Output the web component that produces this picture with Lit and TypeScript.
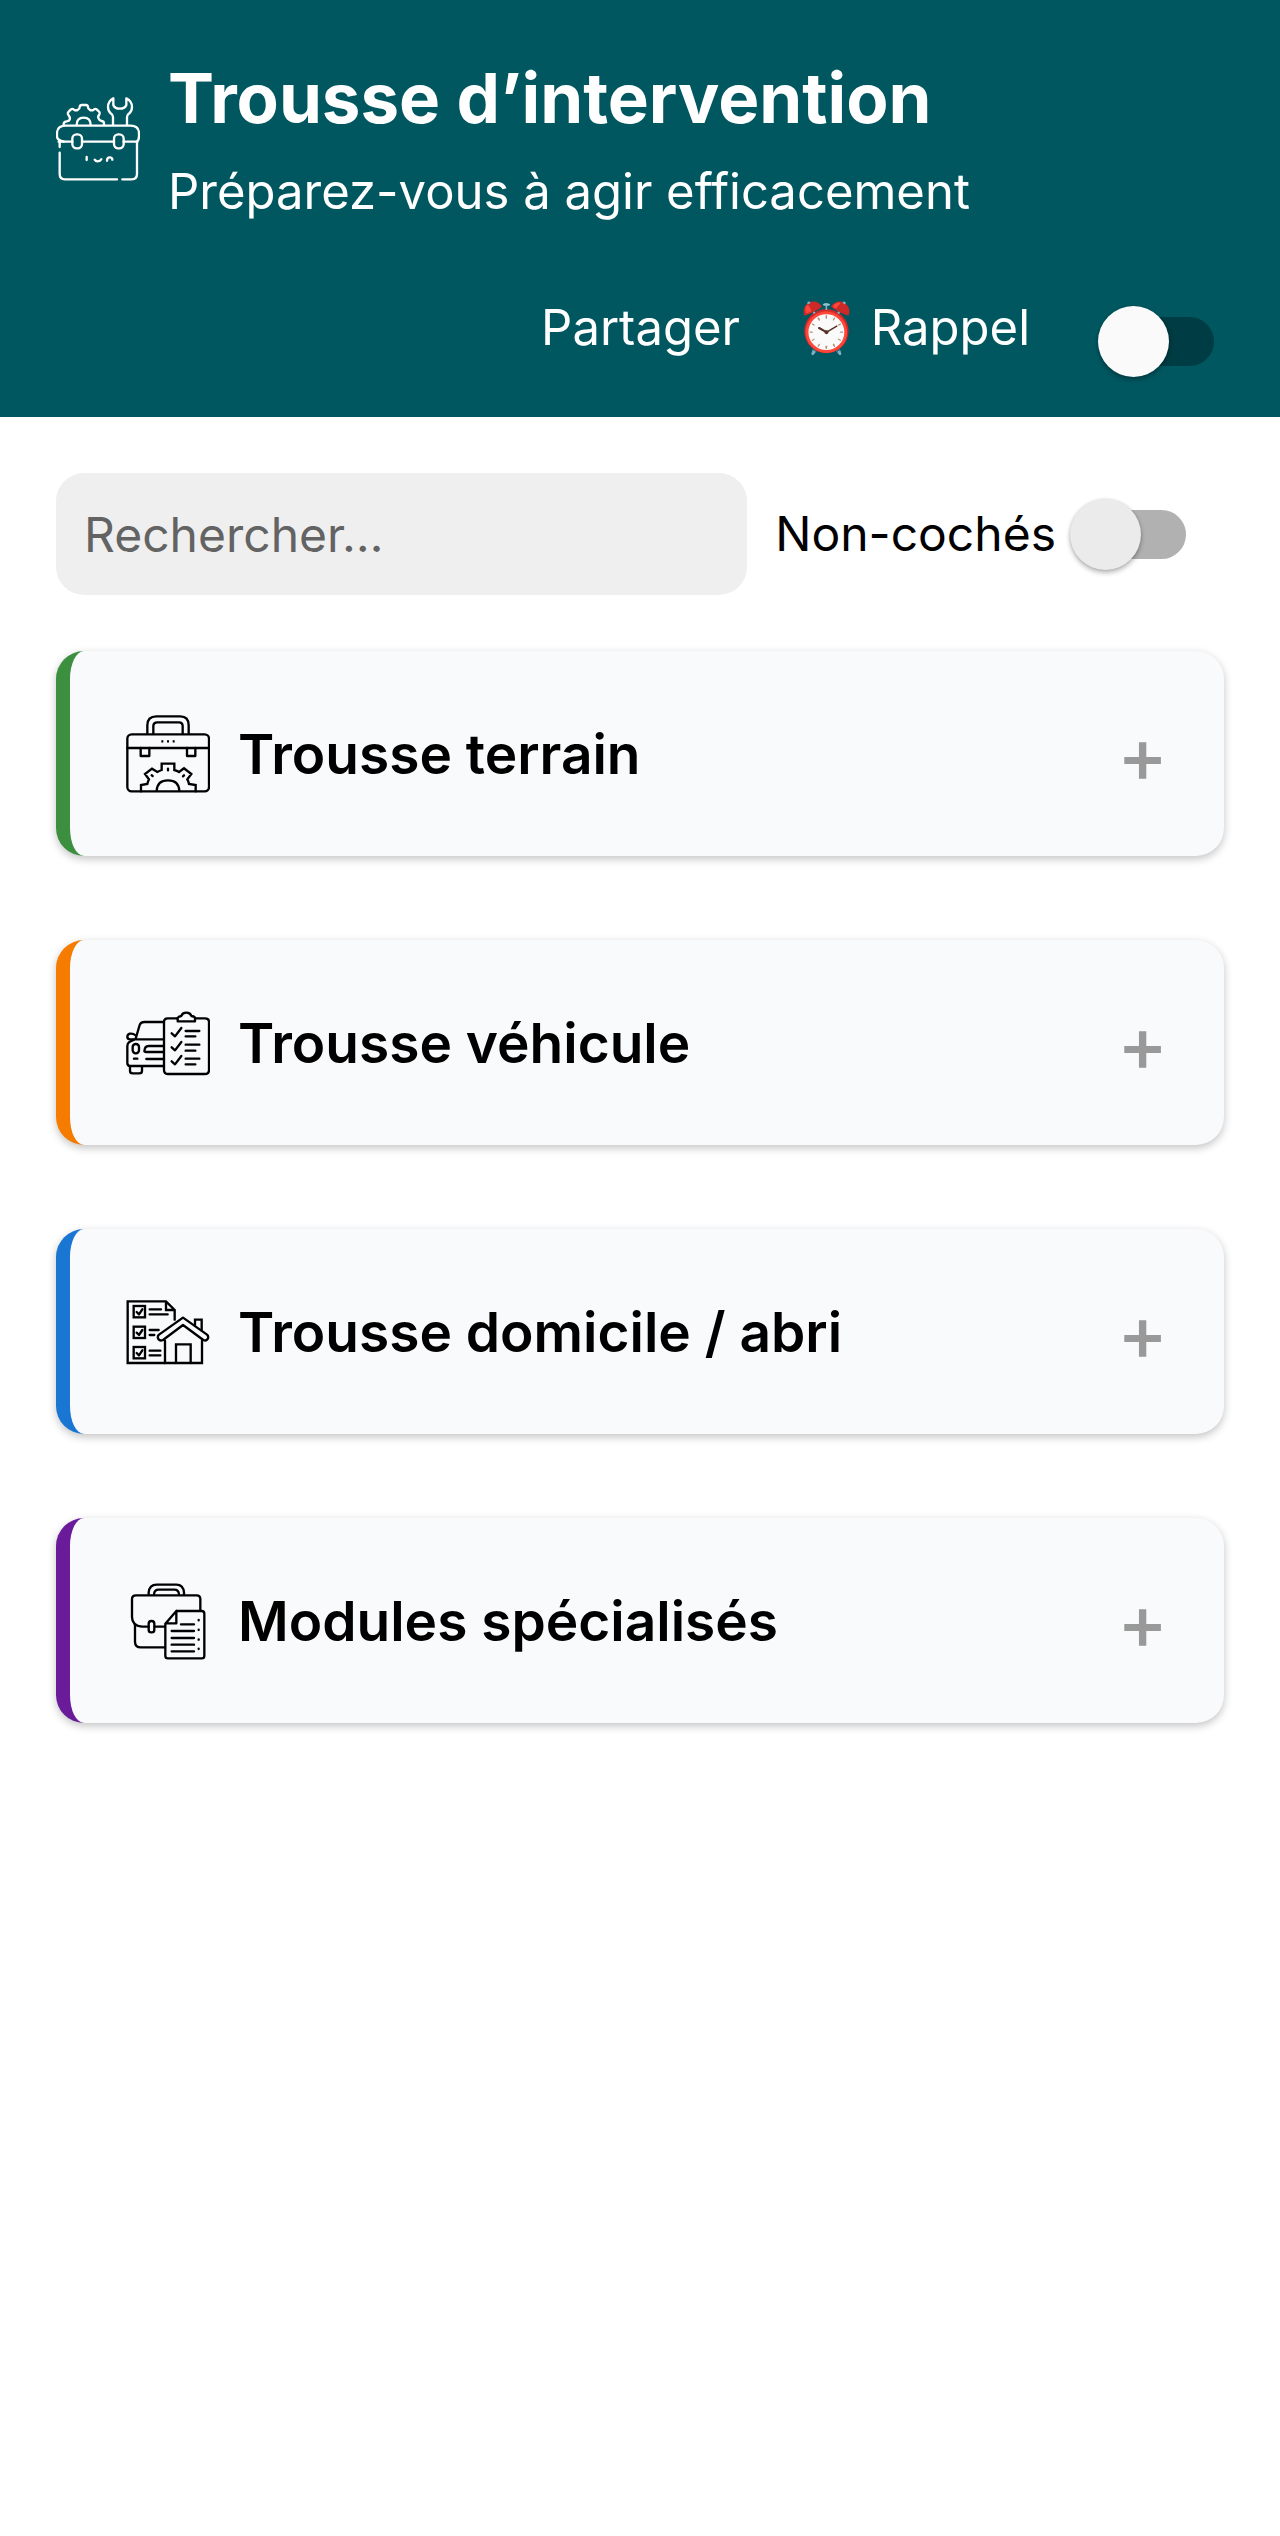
import { LitElement, html, css, svg } from "lit";
import type { SVGTemplateResult } from "lit";
import { customElement, property, state } from "lit/decorators.js";

const toolboxIcon = svg`
  <path d="M72 182Q51 178 51 166V158Q51 134 76 134H272Q297 134 297 158V166Q297 178 290 182" />
  <path d="M56 182H97M126 182H222M251 182H292" />
  <rect x="97" y="160" width="29" height="42" rx="13" />
  <rect x="222" y="160" width="29" height="42" rx="13" />
  <path d="M59 184V198M59 215V279Q59 295 75 295H231M247 295H275Q291 295 291 279V184" />
  <path d="M71 132V128Q72 122 80 121L87 119Q92 112 88 106L84 100Q82 96 86 92L93 85Q97 82 102 86Q108 90 114 86Q119 84 119 78Q120 72 125 72H138Q143 72 144 78Q144 84 149 86Q155 90 161 86Q166 82 170 85L178 93Q181 97 178 101Q172 107 176 113Q178 119 185 120Q192 121 192 127V132" />
  <path d="M110 132Q110 110 131 110Q152 110 152 132" />
  <path d="M219 132V108Q219 101 212 97Q204 90 204 78Q204 61 220 52V72Q224 83 239 83Q255 83 259 72V52Q276 61 276 78Q276 90 268 97Q261 101 261 108V132" />
  <path d="M140 228V237M164 236Q167 241 173 241Q181 241 184 235M201 239Q201 229 209 229Q217 229 217 236" />
`;

const fieldIcon = svg`
  <path d="M112 100V76Q112 49 139 49H211Q236 49 236 76V100" />
  <path d="M130 100V78Q130 67 142 67H207Q218 67 218 78V100" />
  <rect x="52" y="103" width="245" height="171" rx="13" />
  <path d="M52 144H297" />
  <path d="M92 144V168H118V144M231 144V168H256V144" />
  <path d="M154 124H160M171 124H177M188 124H194" stroke-linecap="butt" />
  <path d="M93 274V255L112 252Q114 244 117 238L105 222L126 206L142 216Q149 212 155 210V191H193V210Q201 212 207 216L222 205L244 222L232 238Q236 245 237 252L257 255V274" stroke-linejoin="miter" />
  <path d="M140 272Q142 241 174 241Q206 241 208 272" />
  <path d="M174 206V211M125 226L128 228M222 226L219 229" />
`;

const vehicleIcon = svg`
  <path d="M160 64H103Q92 64 89 73L77 114M77 116H160" />
  <path d="M75 103Q70 98 60 99Q52 101 52 108Q52 116 62 116H72" />
  <path d="M72 117L58 124Q52 128 52 136V187Q52 196 60 196H160" />
  <rect x="68" y="130" width="19" height="28" rx="9" />
  <path d="M160 136H116Q104 136 103 152Q103 154 107 154H160" />
  <path d="M72 174H82M109 175H160" />
  <path d="M60 197V211Q60 218 68 218H88Q96 218 96 211V197" />
  <path d="M201 53H173Q162 53 162 64V208Q162 220 173 220H285Q297 220 297 208V64Q297 53 285 53H257" />
  <path d="M203 62V52Q205 47 214 46Q217 36 229 36Q241 36 244 46Q254 47 255 52V62Z" />
  <path d="M185 98L195 107L214 82M185 140L195 149L214 124M185 182L195 191L214 166" />
  <path d="M227 91H268M227 107H256M227 132H268M227 150H256M227 174H268M227 191H256" />
`;

const homeIcon = svg`
  <path d="M164 218H53V33H168L194 59V88M168 33V59H194" stroke-linejoin="miter" />
  <g stroke-linejoin="miter">
    <rect x="71" y="47" width="34" height="34" />
    <rect x="71" y="109" width="34" height="34" />
    <rect x="71" y="170" width="34" height="34" />
  </g>
  <path d="M80 65L87 72L97 57M80 127L87 134L97 119M80 188L87 195L97 180" />
  <path d="M119 57H153M119 72H173M119 119H146M119 134H133M119 181H151M119 195H151" />
  <path d="M255 104V88H275V120" stroke-linejoin="miter" />
  <path d="M165 151V218H276V151" stroke-linejoin="miter" />
  <path d="M219 82L147 133Q141 139 145 146Q150 153 159 149L219 104L280 149Q288 153 293 146Q297 139 291 133Z" />
  <path d="M198 218V162H242V218" stroke-linejoin="miter" />
`;

const modulesIcon = svg`
  <path d="M116 72V67Q118 43 140 43H199Q220 43 222 67V72" />
  <path d="M132 72Q133 58 146 58H193Q206 58 207 72" />
  <path d="M116 169H96Q66 166 66 140V86Q66 75 78 75H260Q271 75 271 86V120M134 169H165" />
  <rect x="116" y="152" width="17" height="34" rx="8" />
  <path d="M75 162V214Q75 231 93 231H165" />
  <path d="M199 122H275Q283 122 283 130V256Q283 264 275 264H174Q166 264 166 256V160L199 122V159H168" />
  <path d="M213 162H252M185 182H252M185 203H252M185 223H252M185 243H252" />
  <path d="M266 149V150M266 178V179M266 207V208M266 235V236" />
`;

interface Kit {
  id: string;
  title: string;
  icon: SVGTemplateResult;
  box: string;
}

const kits: Kit[] = [
  { id: "field", title: "Trousse terrain", icon: fieldIcon, box: "48 36 252 252" },
  { id: "vehicle", title: "Trousse véhicule", icon: vehicleIcon, box: "48 1 252 252" },
  { id: "home", title: "Trousse domicile / abri", icon: homeIcon, box: "48 -1 252 252" },
  { id: "modules", title: "Modules spécialisés", icon: modulesIcon, box: "48 26 252 252" },
];

@customElement("toggle-switch")
export class ToggleSwitch extends LitElement {
  @property() label = "";

  static styles = css`
    :host {
      display: block;
      flex: none;
    }
    .switch {
      appearance: none;
      display: grid;
      align-items: center;
      width: 116px;
      height: 71px;
      margin: 0;
      cursor: pointer;
    }
    .switch::before,
    .switch::after {
      content: "";
      grid-area: 1 / 1;
    }
    .switch::before {
      height: 49px;
      margin-left: 14px;
      border-radius: 25px;
      background: var(--track, #b1b1b1);
    }
    .switch::after {
      width: 71px;
      height: 71px;
      border-radius: 50%;
      background: var(--thumb, #ebebeb);
      box-shadow: 0 3px 5px rgba(0, 0, 0, 0.28), 0 0 3px rgba(0, 0, 0, 0.12);
    }
    .switch:checked::after {
      justify-self: end;
    }
  `;

  render() {
    return html`<input class="switch" type="checkbox" role="switch" aria-label=${this.label} />`;
  }
}

@customElement("kit-card")
export class KitCard extends LitElement {
  @property({ attribute: false }) kit!: Kit;
  @state() private open = false;

  static styles = css`
    :host {
      display: block;
    }
    .card {
      display: flex;
      align-items: center;
      gap: 28px;
      box-sizing: border-box;
      width: 100%;
      min-height: 205px;
      padding: 56px;
      border: 0 solid;
      border-left: 14px solid var(--accent);
      border-radius: 28px;
      background: #f9fafc;
      box-shadow: 0 3px 8px rgba(0, 0, 0, 0.24);
      color: #000;
      font: inherit;
      text-align: left;
      cursor: pointer;
    }
    .icon {
      flex: none;
      width: 84px;
      height: 84px;
      fill: none;
      stroke: #000;
      stroke-width: 7;
      stroke-linecap: round;
      stroke-linejoin: round;
    }
    .title {
      flex: 1;
      font-size: 55px;
      font-weight: 600;
      line-height: 72px;
    }
    .sign {
      color: #999;
      font-size: 76px;
      font-weight: 500;
      line-height: 72px;
    }
  `;

  render() {
    return html`
      <button class="card" aria-expanded=${this.open} @click=${() => (this.open = !this.open)}>
        <svg class="icon" viewBox=${this.kit.box} aria-hidden="true">${this.kit.icon}</svg>
        <span class="title">${this.kit.title}</span>
        <span class="sign">${this.open ? "−" : "+"}</span>
      </button>
    `;
  }
}

@customElement("app-root")
export class AppRoot extends LitElement {
  static styles = css`
    :host {
      display: block;
      min-height: 100vh;
      background: #fff;
      color: #000;
      font-family: Inter, "Liberation Sans", sans-serif;
    }
    .header {
      padding: 54px 56px 40px;
      background: #005760;
      color: #fff;
    }
    .brand {
      display: flex;
      align-items: center;
      gap: 28px;
    }
    .logo {
      flex: none;
      width: 84px;
      height: 84px;
      fill: none;
      stroke: #fff;
      stroke-width: 7;
      stroke-linecap: round;
      stroke-linejoin: round;
    }
    .name {
      margin: 0 0 18px;
      font-size: 69px;
      font-weight: 700;
      line-height: 88px;
    }
    .tagline {
      margin: 0;
      font-size: 49px;
      line-height: 64px;
    }
    .actions {
      display: flex;
      align-items: flex-start;
      justify-content: flex-end;
      gap: 56px;
      margin-top: 72px;
      padding-right: 10px;
    }
    .action {
      padding: 0;
      border: 0;
      background: none;
      color: inherit;
      font: inherit;
      font-size: 49px;
      line-height: 64px;
      cursor: pointer;
    }
    .theme {
      --track: #003c43;
      --thumb: #fafafa;
      margin-top: 10px;
      margin-left: 12px;
    }
    .content {
      display: flex;
      flex-direction: column;
      gap: 56px;
      padding: 56px;
    }
    .filters {
      display: flex;
      align-items: center;
      padding-right: 38px;
    }
    .search {
      flex: 1;
      min-width: 0;
      box-sizing: border-box;
      height: 122px;
      margin-right: 28px;
      padding: 0 28px;
      border: 0;
      border-radius: 28px;
      background: #efefef;
      color: #000;
      font: inherit;
      font-size: 48px;
    }
    .search::placeholder {
      color: #636363;
      opacity: 1;
    }
    .filter {
      margin-right: 14px;
      font-size: 48px;
      line-height: 64px;
    }
    .kits {
      display: grid;
      gap: 84px;
    }
    .field {
      --accent: #3b8f3f;
    }
    .vehicle {
      --accent: #f57c00;
    }
    .home {
      --accent: #1976d2;
    }
    .modules {
      --accent: #6a1b9a;
    }
  `;

  render() {
    return html`
      <header class="header">
        <div class="brand">
          <svg class="logo" viewBox="48 48 252 252" aria-hidden="true">${toolboxIcon}</svg>
          <div>
            <h1 class="name">Trousse d’intervention</h1>
            <p class="tagline">Préparez-vous à agir efficacement</p>
          </div>
        </div>
        <div class="actions">
          <button class="action">Partager</button>
          <button class="action">⏰ Rappel</button>
          <toggle-switch class="theme" label="Thème"></toggle-switch>
        </div>
      </header>
      <main class="content">
        <div class="filters">
          <input class="search" type="search" placeholder="Rechercher…" aria-label="Rechercher" />
          <span class="filter">Non-cochés</span>
          <toggle-switch label="Non-cochés"></toggle-switch>
        </div>
        <div class="kits">
          ${kits.map((kit) => html`<kit-card class=${kit.id} .kit=${kit}></kit-card>`)}
        </div>
      </main>
    `;
  }
}
